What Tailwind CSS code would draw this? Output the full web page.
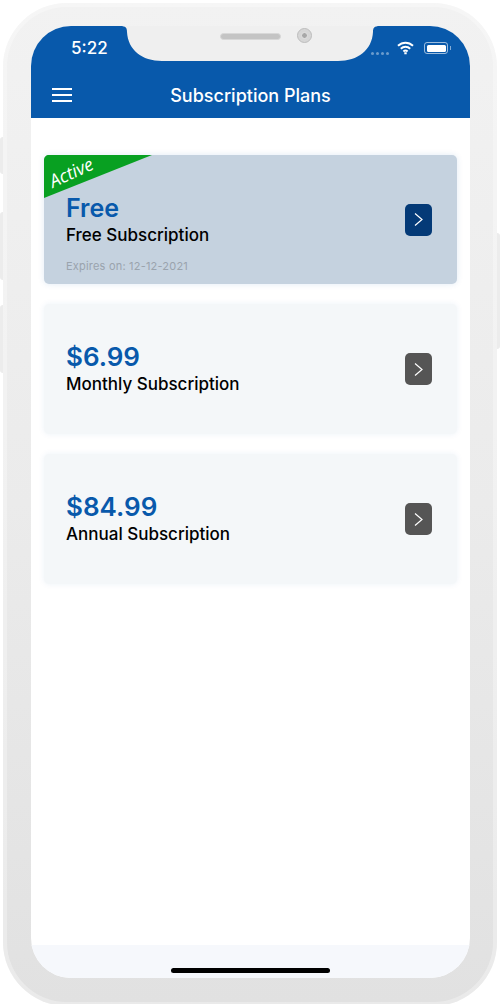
<!DOCTYPE html>
<html>
<head>
    <title>Subscription Plans</title>
    <script src="https://cdn.jsdelivr.net/npm/@tailwindcss/browser@4"></script>
</head>
<body class="bg-white font-['Inter',sans-serif]">
    <div class="relative w-[500px] h-[1004px] overflow-hidden pt-[3px] px-[3px]">
        <!-- Side buttons -->
        <div class="absolute left-0 top-[137px] w-[3px] h-[37px] bg-[#ececec] rounded-l"></div>
        <div class="absolute left-0 top-[212px] w-[3px] h-[68px] bg-[#ececec] rounded-l"></div>
        <div class="absolute left-0 top-[305px] w-[3px] h-[68px] bg-[#ececec] rounded-l"></div>
        <div class="absolute right-0 top-[233px] w-[3px] h-[116px] bg-[#ececec] rounded-r"></div>

        <!-- Phone body -->
        <div class="h-[1003px] rounded-[64px] bg-gradient-to-b from-[#f2f2f2] via-[#ebebeb] to-[#e1e1e1] shadow-[inset_0_0_0_4px_rgba(255,255,255,0.3)] pt-[23px] px-[28px]">
            <!-- Screen -->
            <div class="relative h-[952px] w-[439px] overflow-hidden rounded-[40px] bg-white flex flex-col">
                <!-- Header -->
                <div class="h-[92px] shrink-0 bg-[#0859ab] relative text-white">
                    <div class="absolute left-[40px] top-[12px] text-[17px] font-medium leading-5">5:22</div>
                    <!-- Status icons -->
                    <div class="absolute left-[340px] top-[18px] flex items-center gap-[2px]">
                        <span class="w-[3px] h-[3px] rounded-full bg-white/40 mt-[7px]"></span>
                        <span class="w-[3px] h-[3px] rounded-full bg-white/40 mt-[7px]"></span>
                        <span class="w-[3px] h-[3px] rounded-full bg-white/40 mt-[7px]"></span>
                        <span class="w-[3px] h-[3px] rounded-full bg-white/40 mt-[7px]"></span>
                        <svg class="ml-[6px] -mt-[3px]" width="17" height="14" viewBox="0 0 17 14" fill="none" stroke="white" stroke-width="2">
                            <path d="M1 4.8C5.4 .6 11.6 .6 16 4.8"/>
                            <path d="M3.8 7.8C6.5 5.2 10.5 5.2 13.2 7.8"/>
                            <path d="M6.4 10.4C7.6 9.3 9.4 9.3 10.6 10.4"/>
                            <path d="M8.5 11.2 L8.5 13.2" stroke-width="2.4"/>
                        </svg>
                        <div class="ml-[8px] -mt-[3px] w-[24px] h-[12px] rounded-[3px] border border-white/60 p-[1.5px]">
                            <div class="w-full h-full rounded-[1.5px] bg-white"></div>
                        </div>
                        <span class="w-[1px] h-[4px] bg-white/50 -mt-[3px]"></span>
                    </div>
                    <!-- Hamburger -->
                    <div class="absolute left-[21px] top-[62px] w-[20px] flex flex-col gap-[4px]">
                        <span class="h-[2px] bg-white"></span>
                        <span class="h-[2px] bg-white"></span>
                        <span class="h-[2px] bg-white"></span>
                    </div>
                    <div class="absolute inset-x-0 top-[58px] text-center text-[18px] font-medium leading-6">Subscription Plans</div>
                </div>

                <!-- Plans -->
                <div class="flex-1 px-[13px] pt-[37px] flex flex-col gap-[20px]">
                    <div class="relative h-[129px] rounded-[5px] bg-[#c5d2df] shadow-[0_0_6px_rgba(8,89,171,0.12)] pl-[22px] flex items-center justify-between pr-[25px]">
                        <svg class="absolute left-0 top-0" width="108" height="43" viewBox="0 0 108 43">
                            <path d="M5 0H108L0 43V5C0 2 2 0 5 0Z" fill="#08a021"/>
                        </svg>
                        <div class="absolute left-[4px] top-[7px] text-white text-[18px] italic leading-5 font-['Open_Sans',sans-serif] -rotate-[25deg]">Active</div>
                        <div class="pt-[26px]">
                            <div class="text-[#0859ab] text-[25px] font-semibold leading-[28px] mt-[3px]">Free</div>
                            <div class="text-black text-[17px] font-medium leading-[26px]">Free Subscription</div>
                            <div class="text-[#9aa3ad] text-[11px] tracking-[0.2px] leading-4 mt-[10px]">Expires on: 12-12-2021</div>
                        </div>
                        <div class="w-[27px] h-[32px] rounded-[5px] bg-[#043a77] flex items-center justify-center">
                            <svg width="11" height="15" viewBox="0 0 11 15" fill="none" stroke="white" stroke-width="1.2"><path d="M2 1.5 L9 7.5 L2 13.5"/></svg>
                        </div>
                    </div>

                    <div class="h-[130px] rounded-[5px] bg-[#f4f7f9] shadow-[0_0_6px_rgba(8,89,171,0.08)] pl-[22px] pr-[25px] flex items-center justify-between">
                        <div class="pt-[2px]">
                            <div class="text-[#0859ab] text-[26px] font-semibold leading-[28px]">$6.99</div>
                            <div class="text-black text-[17px] font-medium leading-[26px]">Monthly Subscription</div>
                        </div>
                        <div class="w-[27px] h-[32px] rounded-[5px] bg-[#555555] flex items-center justify-center">
                            <svg width="11" height="15" viewBox="0 0 11 15" fill="none" stroke="white" stroke-width="1.2"><path d="M2 1.5 L9 7.5 L2 13.5"/></svg>
                        </div>
                    </div>

                    <div class="h-[130px] rounded-[5px] bg-[#f4f7f9] shadow-[0_0_6px_rgba(8,89,171,0.08)] pl-[22px] pr-[25px] flex items-center justify-between">
                        <div class="pt-[2px]">
                            <div class="text-[#0859ab] text-[26px] font-semibold leading-[28px]">$84.99</div>
                            <div class="text-black text-[17px] font-medium leading-[26px]">Annual Subscription</div>
                        </div>
                        <div class="w-[27px] h-[32px] rounded-[5px] bg-[#555555] flex items-center justify-center">
                            <svg width="11" height="15" viewBox="0 0 11 15" fill="none" stroke="white" stroke-width="1.2"><path d="M2 1.5 L9 7.5 L2 13.5"/></svg>
                        </div>
                    </div>
                </div>

                <!-- Home bar -->
                <div class="h-[33px] shrink-0 bg-[#f6f8fc] flex justify-center pt-[23px]">
                    <div class="w-[159px] h-[5px] rounded-full bg-black"></div>
                </div>
            </div>
        </div>

        <!-- Notch -->
        <svg class="absolute left-[120px] top-[26px]" width="260" height="36" viewBox="0 0 260 36">
            <path d="M0 0H260C254 0 253 2 253 6C252 24 238 35 218 35H42C22 35 8 24 7 6C7 2 6 0 0 0Z" fill="#efefef"/>
        </svg>
        <div class="absolute left-[220px] top-[33px] w-[61px] h-[7px] rounded-full bg-[#c4c4c4] border border-[#d8d8d8]"></div>
        <div class="absolute left-[297px] top-[28px] w-[15px] h-[15px] rounded-full bg-[#d6d6d6] border border-[#bdbdbd] flex items-center justify-center">
            <div class="w-[7px] h-[7px] rounded-full bg-[#a8a8a8] border border-[#e5e5e5]"></div>
        </div>
    </div>
</body>
</html>
